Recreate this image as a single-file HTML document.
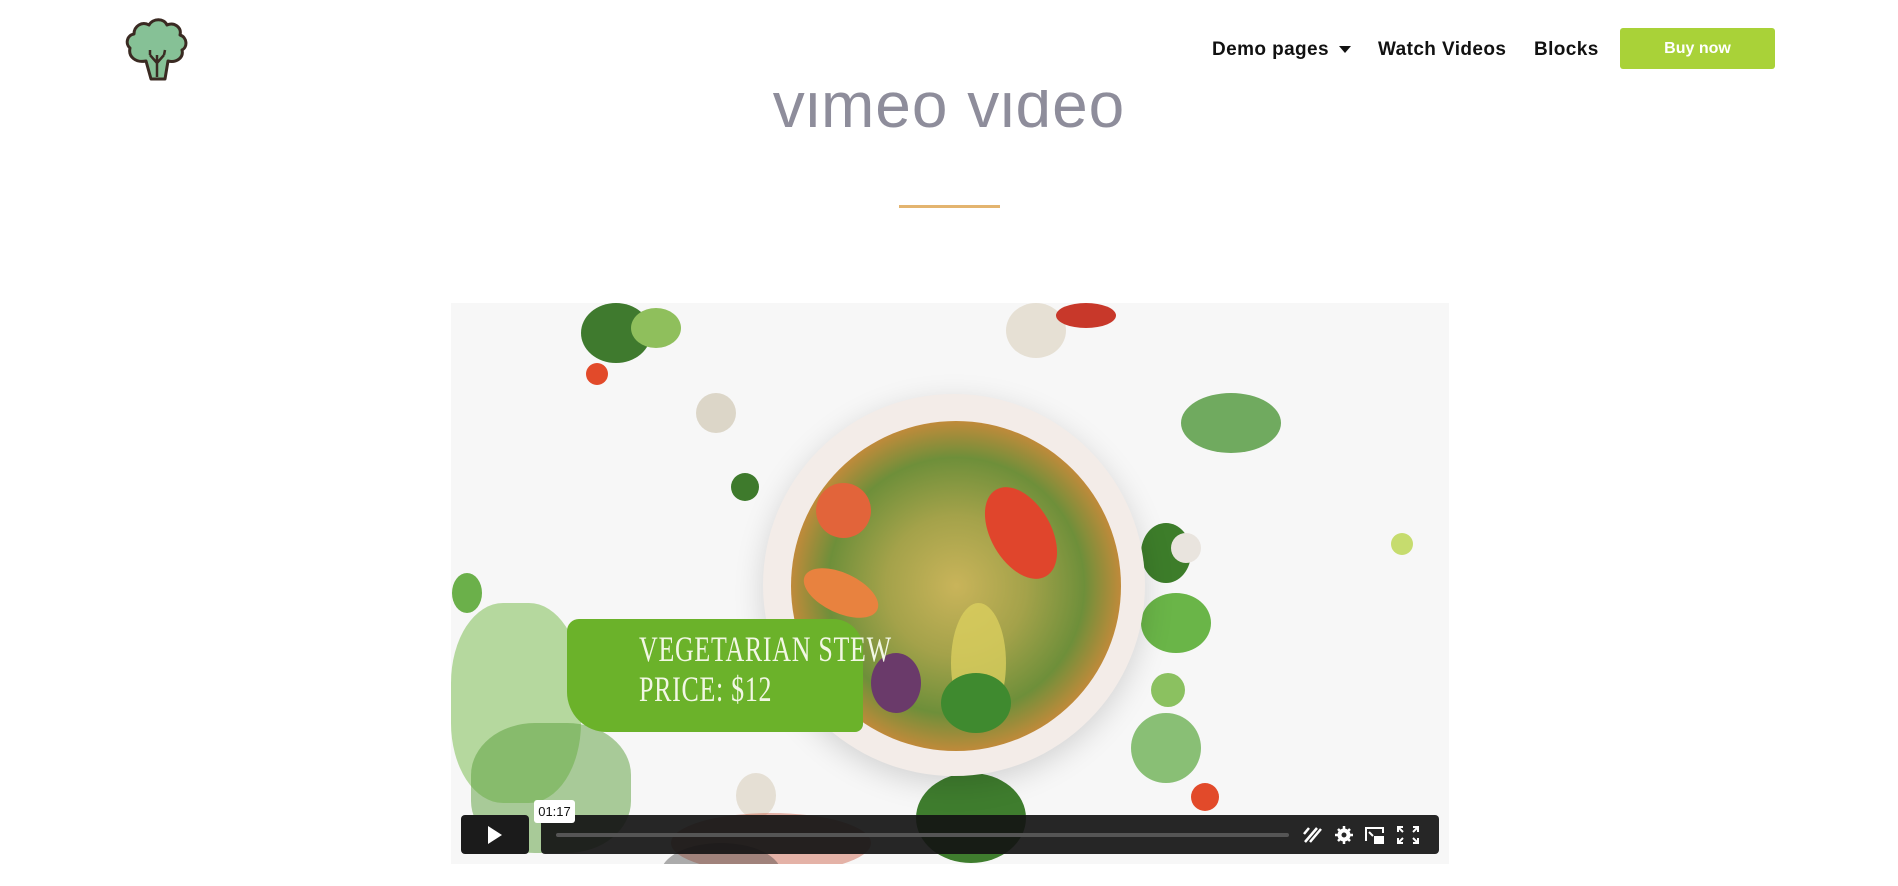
<!DOCTYPE html>
<html><head><meta charset="utf-8"><style>
*{margin:0;padding:0;box-sizing:border-box}
html,body{width:1898px;height:886px;overflow:hidden;background:#fff;font-family:"Liberation Sans",sans-serif}
.title{position:absolute;left:0;width:1898px;top:60px;text-align:center;font-size:64px;color:#8e8d9b;letter-spacing:1px;line-height:90px}
.header{position:absolute;left:0;top:0;width:1898px;height:90px;background:#fff}
.nav{position:absolute;top:39px;font-weight:bold;font-size:19px;color:#111;letter-spacing:0.4px}
.btn{position:absolute;left:1620px;top:28px;width:155px;height:41px;background:#a9d238;border-radius:3px;color:#fff;font-weight:bold;font-size:16px;text-align:center;line-height:41px}
.line{position:absolute;left:899px;top:205px;width:101px;height:3px;background:#e3b46f}
.video{position:absolute;left:451px;top:303px;width:998px;height:561px;background:#f7f7f7;overflow:hidden}
.d{position:absolute;border-radius:50%}
</style></head><body>
<div class="title">vimeo video</div>
<div class="header">
<svg style="position:absolute;left:124px;top:17px" width="66" height="64" viewBox="0 0 66 64">
<path d="M22 44 C12 46 4 40 6 31 C1 27 3 18 10 17 C10 9 18 4 25 8 C29 1 40 1 43 8 C50 5 58 10 56 18 C63 20 64 30 58 33 C60 41 52 46 44 44 L41 62 L27 62 Z" fill="#86c196" stroke="#3a2a22" stroke-width="3" stroke-linejoin="round"/>
<path d="M33 60 L33 38 M33 46 L26 38 M33 46 L40 38 M26 38 L26 33 M40 38 L41 33" stroke="#3a2a22" stroke-width="2.5" fill="none"/>
</svg>
<div class="nav" style="left:1212px">Demo pages <span style="display:inline-block;width:0;height:0;border-left:6px solid transparent;border-right:6px solid transparent;border-top:7px solid #111;vertical-align:middle;margin-left:4px"></span></div>
<div class="nav" style="left:1378px">Watch Videos</div>
<div class="nav" style="left:1534px">Blocks</div>
<div class="btn">Buy now</div>
</div>
<div class="line"></div>
<div class="video">
<div class="d" style="left:130px;top:0;width:70px;height:60px;background:#3f7a2e"></div>
<div class="d" style="left:180px;top:5px;width:50px;height:40px;background:#8fbf5c"></div>
<div class="d" style="left:135px;top:60px;width:22px;height:22px;background:#e24a2a"></div>
<div class="d" style="left:245px;top:90px;width:40px;height:40px;background:#dcd6c8"></div>
<div class="d" style="left:1px;top:270px;width:30px;height:40px;background:#6bb04a"></div>
<div class="d" style="left:280px;top:170px;width:28px;height:28px;background:#3e7a2c"></div>
<div class="d" style="left:0;top:300px;width:130px;height:200px;background:#7fbf55;opacity:.55;border-radius:40%"></div>
<div class="d" style="left:20px;top:420px;width:160px;height:130px;background:#5a9d3a;opacity:.5;border-radius:40%"></div>
<div class="d" style="left:285px;top:470px;width:40px;height:45px;background:#e5dfd4"></div>
<div class="d" style="left:220px;top:510px;width:200px;height:60px;background:#c94a30;opacity:.4"></div>
<div class="d" style="left:555px;top:0;width:60px;height:55px;background:#e6e0d4"></div>
<div class="d" style="left:605px;top:0;width:60px;height:25px;background:#c8382a"></div>
<div class="d" style="left:730px;top:90px;width:100px;height:60px;background:#4d9638;opacity:.8"></div>
<div class="d" style="left:690px;top:220px;width:50px;height:60px;background:#3d7d2a"></div>
<div class="d" style="left:690px;top:290px;width:70px;height:60px;background:#6ab548"></div>
<div class="d" style="left:720px;top:230px;width:30px;height:30px;background:#e9e4de"></div>
<div class="d" style="left:700px;top:370px;width:34px;height:34px;background:#8bc160"></div>
<div class="d" style="left:680px;top:410px;width:70px;height:70px;background:#5aa63d;opacity:.7"></div>
<div class="d" style="left:740px;top:480px;width:28px;height:28px;background:#e24a2a"></div>
<div class="d" style="left:465px;top:470px;width:110px;height:90px;background:#3f7d2e"></div>
<div class="d" style="left:210px;top:540px;width:120px;height:60px;background:#3a3a3a;opacity:.4"></div>
<div class="d" style="left:940px;top:230px;width:22px;height:22px;background:#c6dc6e"></div>
<div class="d" style="left:312px;top:91px;width:382px;height:382px;background:#f3ece8;box-shadow:0 8px 30px rgba(0,0,0,.15)"></div>
<div class="d" style="left:340px;top:118px;width:330px;height:330px;background:radial-gradient(circle at 50% 50%,#c9b45a 0,#a4a24a 30%,#6e8f3a 55%,#d6893a 75%,#b98a7a 100%)"></div>
<div class="d" style="left:540px;top:180px;width:60px;height:100px;background:#e0452c;transform:rotate(-30deg)"></div>
<div class="d" style="left:365px;top:180px;width:55px;height:55px;background:#e2643a"></div>
<div class="d" style="left:500px;top:300px;width:55px;height:120px;background:#d9ce5e;opacity:.8"></div>
<div class="d" style="left:420px;top:350px;width:50px;height:60px;background:#6a3a6a"></div>
<div class="d" style="left:490px;top:370px;width:70px;height:60px;background:#3f8a2f"></div>
<div class="d" style="left:350px;top:270px;width:80px;height:40px;background:#e8823f;transform:rotate(25deg)"></div>
<div style="position:absolute;left:116px;top:316px;width:296px;height:113px;background:#6bb22a;border-radius:12px 30px 8px 40px"></div>
<div style="position:absolute;left:188px;top:326px;font-family:'Liberation Serif',serif;font-size:36px;color:#f2f7e4;line-height:40px;transform:scaleX(.72);transform-origin:left top;white-space:nowrap;letter-spacing:1px">VEGETARIAN STEW<br>PRICE: $12</div>
<div style="position:absolute;left:10px;top:512px;width:68px;height:39px;background:#1b1b1b;border-radius:4px"></div>
<svg style="position:absolute;left:35px;top:522px" width="18" height="20"><path d="M2 1 L16 10 L2 19 Z" fill="#fff"/></svg>
<div style="position:absolute;left:90px;top:512px;width:898px;height:39px;background:rgba(20,20,20,.92);border-radius:4px"></div>
<div style="position:absolute;left:105px;top:530px;width:733px;height:4px;background:#555;border-radius:2px"></div>
<div style="position:absolute;left:83px;top:497px;width:41px;height:23px;background:#fff;border-radius:3px;font-size:13px;color:#111;text-align:center;line-height:23px">01:17</div>
<svg style="position:absolute;left:850px;top:521px" width="135" height="22" viewBox="0 0 135 22" fill="none" stroke="#fff" stroke-width="2.5">
<path d="M4 18 L16 4 M9 18 L20 5 M3 10 L8 4"/>
<circle cx="43" cy="11" r="4.5" stroke-width="4"/>
<path d="M43 2 V5 M43 17 V20 M34 11 H37 M49 11 H52 M37 5 L39 7 M47 15 L49 17 M37 17 L39 15 M47 7 L49 5"/>
<path d="M65 17 V4 H82 V9 M68 8 L72 12" stroke-width="2"/>
<rect x="73" y="12" width="10" height="8" fill="#fff" stroke="none"/>
<path d="M97 8 V3 H102 M112 3 H117 V8 M117 14 V19 H112 M102 19 H97 V14 M97 3 L102 8 M117 3 L112 8 M117 19 L112 14 M97 19 L102 14" stroke-width="2"/>
</svg>
</div>
</body></html>
